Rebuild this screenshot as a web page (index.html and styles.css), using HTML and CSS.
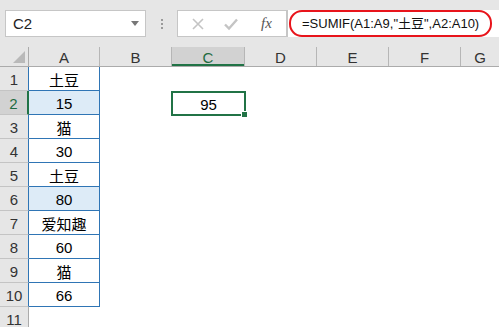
FILE: index.html
```html
<!DOCTYPE html>
<html lang="zh-CN">
<head>
    <meta charset="UTF-8">
    <title>SUMIF</title>
    <link rel="stylesheet" href="styles.css">
</head>
<body>
<div class="topbar">
    <div class="namebox">
        <span>C2</span>
        <span class="caret"></span>
    </div>
    <div class="grip"><i></i><i></i><i></i></div>
    <div class="btns">
        <svg class="ico" width="14" height="14" viewBox="0 0 14 14"><path d="M2 2L12 12M12 2L2 12" stroke="#c4c4c4" stroke-width="1.6" fill="none"/></svg>
        <svg class="ico" width="16" height="14" viewBox="0 0 16 14"><path d="M2 7.5L6 11.5L14 2.5" stroke="#c4c4c4" stroke-width="2.4" fill="none"/></svg>
        <span class="fx">fx</span>
    </div>
    <div class="formula">
        <div class="oval">=SUMIF(A1:A9,"土豆",A2:A10)</div>
    </div>
</div>

<div class="sheet">
    <div class="hrow">
        <div class="corner"><span class="tri"></span></div>
        <div class="ch">A</div>
        <div class="ch">B</div>
        <div class="ch sel">C</div>
        <div class="ch">D</div>
        <div class="ch">E</div>
        <div class="ch">F</div>
        <div class="ch last">G</div>
    </div>
    <div class="row"><div class="rh">1</div><div class="cell a">土豆</div></div>
    <div class="row"><div class="rh sel">2</div><div class="cell a hi">15</div><div class="cell"></div><div class="cell cur">95<span class="handle"></span></div></div>
    <div class="row"><div class="rh">3</div><div class="cell a">猫</div></div>
    <div class="row"><div class="rh">4</div><div class="cell a">30</div></div>
    <div class="row"><div class="rh">5</div><div class="cell a">土豆</div></div>
    <div class="row"><div class="rh">6</div><div class="cell a hi">80</div></div>
    <div class="row"><div class="rh">7</div><div class="cell a">爱知趣</div></div>
    <div class="row"><div class="rh">8</div><div class="cell a">60</div></div>
    <div class="row"><div class="rh">9</div><div class="cell a">猫</div></div>
    <div class="row"><div class="rh">10</div><div class="cell a">66</div></div>
    <div class="row"><div class="rh plain">11</div></div>
</div>
</body>
</html>
```

FILE: styles.css
```css
body {
    margin: 0;
    background: #fff;
    font-family: "Liberation Sans", "Noto Sans CJK SC", sans-serif;
    color: #000;
    overflow: hidden;
}

/* formula bar */
.topbar {
    height: 47px;
    background: #e6e6e6;
    display: flex;
    align-items: flex-start;
    padding-top: 10px;
    box-sizing: border-box;
}
.namebox {
    margin-left: 5px;
    width: 141px;
    height: 27px;
    box-sizing: border-box;
    background: #fff;
    border: 1px solid #c6c6c6;
    display: flex;
    align-items: center;
    justify-content: space-between;
    padding: 0 6px 0 7px;
    font-size: 15px;
    color: #222;
}
.caret {
    width: 0;
    height: 0;
    border-left: 4px solid transparent;
    border-right: 4px solid transparent;
    border-top: 5px solid #777;
}
.grip {
    width: 31px;
    height: 27px;
    display: flex;
    flex-direction: column;
    align-items: center;
    justify-content: center;
    gap: 2px;
}
.grip i {
    width: 2px;
    height: 2px;
    background: #9a9a9a;
}
.btns {
    width: 110px;
    height: 27px;
    box-sizing: border-box;
    background: #fff;
    border: 1px solid #c6c6c6;
    display: flex;
    align-items: center;
    padding-left: 13px;
    gap: 18px;
}
.fx {
    font-family: "Liberation Serif", serif;
    font-style: italic;
    font-size: 15px;
    color: #555;
    margin-left: 4px;
}
.formula {
    flex: 1;
    height: 27px;
    background: #fff;
    border-left: 1px solid #c6c6c6;
    box-sizing: border-box;
    padding-left: 1px;
}
.oval {
    width: 203px;
    height: 27px;
    box-sizing: border-box;
    border: 2px solid #e8141b;
    border-radius: 13px;
    padding-left: 11px;
    font-size: 13px;
    line-height: 23px;
    white-space: nowrap;
    color: #111;
}

/* grid */
.hrow, .row {
    display: grid;
    grid-template-columns: 29px 71px 72px 73px 72px 72px 72px 1fr;
}
.hrow {
    height: 19px;
    background: #e6e6e6;
    border-bottom: 1px solid #ababab;
}
.corner {
    border-right: 1px solid #ababab;
    position: relative;
}
.tri {
    position: absolute;
    right: 3px;
    bottom: 3px;
    width: 12px;
    height: 12px;
    background: #b9b9b9;
    clip-path: polygon(100% 0, 100% 100%, 0 100%);
}
.ch {
    border-right: 1px solid #b6b6b6;
    display: flex;
    justify-content: center;
    align-items: flex-end;
    font-size: 15px;
    line-height: 17px;
    color: #333;
}
.ch.last {
    border-right: none;
}
.ch.sel {
    background: #d2d2d2;
    color: #1e6b41;
    box-shadow: inset 0 -2px 0 #217346;
}
.row {
    height: 24px;
}
.rh {
    background: #e6e6e6;
    border-right: 1px solid #2f75b5;
    border-bottom: 1px solid #c4c4c4;
    display: flex;
    justify-content: center;
    align-items: flex-end;
    font-size: 15px;
    line-height: 20px;
    color: #333;
}
.rh.plain {
    border-right-color: #ababab;
}
.rh.sel {
    background: #d2d2d2;
    color: #1e6b41;
    border-right: 2px solid #217346;
}
.cell {
    display: flex;
    justify-content: center;
    align-items: center;
    font-size: 15px;
    padding-top: 2px;
    box-sizing: border-box;
}
.cell.a {
    border-right: 1px solid #2f75b5;
    border-bottom: 1px solid #2f75b5;
}
.cell.hi {
    background: #ddebf7;
}
.cell.cur {
    position: relative;
    border: 2px solid #217346;
    margin: 0 -1px -1px -1px;
}
.handle {
    position: absolute;
    right: -4px;
    bottom: -4px;
    width: 5px;
    height: 5px;
    background: #217346;
    border: 1px solid #fff;
}
```
